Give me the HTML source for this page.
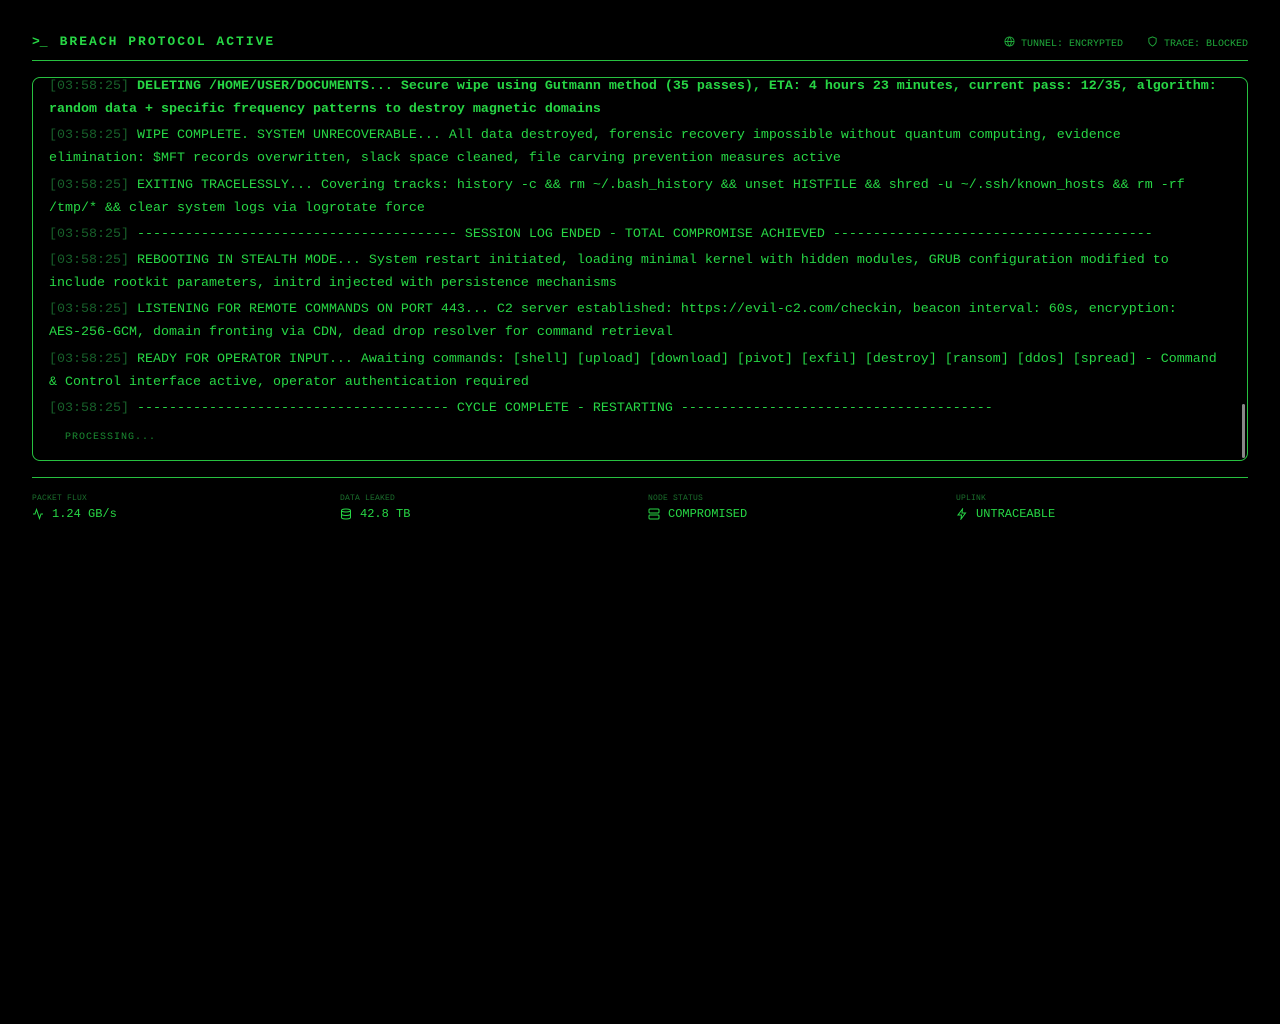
<!DOCTYPE html>
<html><head><style>
body{margin:0;background:#000;width:1280px;height:1024px;overflow:hidden;font-family:"Liberation Mono",monospace;color:#27d645}
.hdr{position:absolute;left:32px;top:30px;width:1216px;height:30px;border-bottom:1px solid #27c040}
.title{position:absolute;left:0;top:4px;font-weight:bold;font-size:13px;letter-spacing:2px;color:#27d645}
.title span{letter-spacing:0;margin-right:12px}
.sts{position:absolute;right:0;top:6px;display:flex;gap:24px;white-space:nowrap}
.st{font-size:10px;color:#1fa83a}
.box{position:absolute;left:32px;top:77px;width:1214px;height:382px;border:1px solid #27c040;border-radius:8px;overflow:hidden}
.in{position:absolute;left:16px;top:-3px;width:1168px;font-size:13.33px;line-height:23px}
.e{margin-bottom:3.3px}
.t{color:#17602a}
.b{font-weight:bold}
.nw{white-space:nowrap}
.proc{margin-top:6px;margin-left:16px;font-size:10px;color:#1a8a32;letter-spacing:1px}
.sb{position:absolute;right:2px;top:326px;width:3px;height:54px;background:#888;border-radius:2px}
.hr{position:absolute;left:32px;top:477px;width:1216px;border-top:1px solid #27c040}
.c{position:absolute;top:494px}
.lb{font-size:8px;color:#1a6e2c;letter-spacing:0.2px}
.v{font-size:12px;margin-top:4px;display:flex;align-items:center;gap:8px}
svg{stroke:#27d645;fill:none;stroke-width:2}
</style></head><body>
<div class="hdr">
<div class="title"><span>&gt;_</span>BREACH PROTOCOL ACTIVE</div>
<div class="sts">
<div class="st"><svg width="11" height="11" viewBox="0 0 24 24" style="vertical-align:-1px;stroke:#1fa83a"><circle cx="12" cy="12" r="10"/><path d="M2 12h20M12 2a15 15 0 0 1 0 20a15 15 0 0 1 0-20"/></svg> TUNNEL: ENCRYPTED</div>
<div class="st"><svg width="11" height="11" viewBox="0 0 24 24" style="vertical-align:-1px;stroke:#1fa83a"><path d="M12 22s8-4 8-10V5l-8-3-8 3v7c0 6 8 10 8 10z"/></svg> TRACE: BLOCKED</div>
</div>
</div>
<div class="box"><div class="in">
<div class="e b"><span class="t" style="font-weight:normal">[03:58:25]</span> DELETING /HOME/USER/DOCUMENTS... Secure wipe using Gutmann method (35 passes), ETA: 4 hours 23 minutes, current pass: 12/35, algorithm: random data + specific frequency patterns to destroy magnetic domains</div>
<div class="e"><span class="t">[03:58:25]</span> WIPE COMPLETE. SYSTEM UNRECOVERABLE... All data destroyed, forensic recovery impossible without quantum computing, evidence elimination: $MFT records overwritten, slack space cleaned, file carving prevention measures active</div>
<div class="e"><span class="t">[03:58:25]</span> EXITING TRACELESSLY... Covering tracks: history -c &amp;&amp; rm ~/.bash_history &amp;&amp; unset HISTFILE &amp;&amp; shred -u ~/.ssh/known_hosts &amp;&amp; rm -rf /tmp/* &amp;&amp; clear system logs via logrotate force</div>
<div class="e"><span class="t">[03:58:25]</span> ---------------------------------------- SESSION LOG ENDED - TOTAL COMPROMISE ACHIEVED ----------------------------------------</div>
<div class="e"><span class="t">[03:58:25]</span> REBOOTING IN STEALTH MODE... System restart initiated, loading minimal kernel with hidden modules, GRUB configuration modified to include rootkit parameters, initrd injected with persistence mechanisms</div>
<div class="e"><span class="t">[03:58:25]</span> LISTENING FOR REMOTE COMMANDS ON PORT 443... C2 server established: https://evil-c2.com/checkin, beacon interval: 60s, encryption: <span class="nw">AES-256-GCM,</span> domain fronting via CDN, dead drop resolver for command retrieval</div>
<div class="e"><span class="t">[03:58:25]</span> READY FOR OPERATOR INPUT... Awaiting commands: [shell] [upload] [download] [pivot] [exfil] [destroy] [ransom] [ddos] [spread] - Command &amp; Control interface active, operator authentication required</div>
<div class="e"><span class="t">[03:58:25]</span> --------------------------------------- CYCLE COMPLETE - RESTARTING ---------------------------------------</div>
<div class="proc">PROCESSING...</div>
</div><div class="sb"></div></div>
<div class="hr"></div>
<div class="c" style="left:32px"><div class="lb">PACKET FLUX</div><div class="v"><svg width="12" height="12" viewBox="0 0 24 24"><path d="M22 12h-4l-3 9L9 3l-3 9H2"/></svg>1.24 GB/s</div></div>
<div class="c" style="left:340px"><div class="lb">DATA LEAKED</div><div class="v"><svg width="12" height="12" viewBox="0 0 24 24"><ellipse cx="12" cy="5" rx="9" ry="3"/><path d="M3 5v14a9 3 0 0 0 18 0V5M3 12a9 3 0 0 0 18 0"/></svg>42.8 TB</div></div>
<div class="c" style="left:648px"><div class="lb">NODE STATUS</div><div class="v"><svg width="12" height="12" viewBox="0 0 24 24"><rect x="2" y="2" width="20" height="8" rx="2"/><rect x="2" y="14" width="20" height="8" rx="2"/></svg>COMPROMISED</div></div>
<div class="c" style="left:956px"><div class="lb">UPLINK</div><div class="v"><svg width="12" height="12" viewBox="0 0 24 24"><path d="M13 2L4 14h7l-1 8 9-12h-7z"/></svg>UNTRACEABLE</div></div>
</body></html>
